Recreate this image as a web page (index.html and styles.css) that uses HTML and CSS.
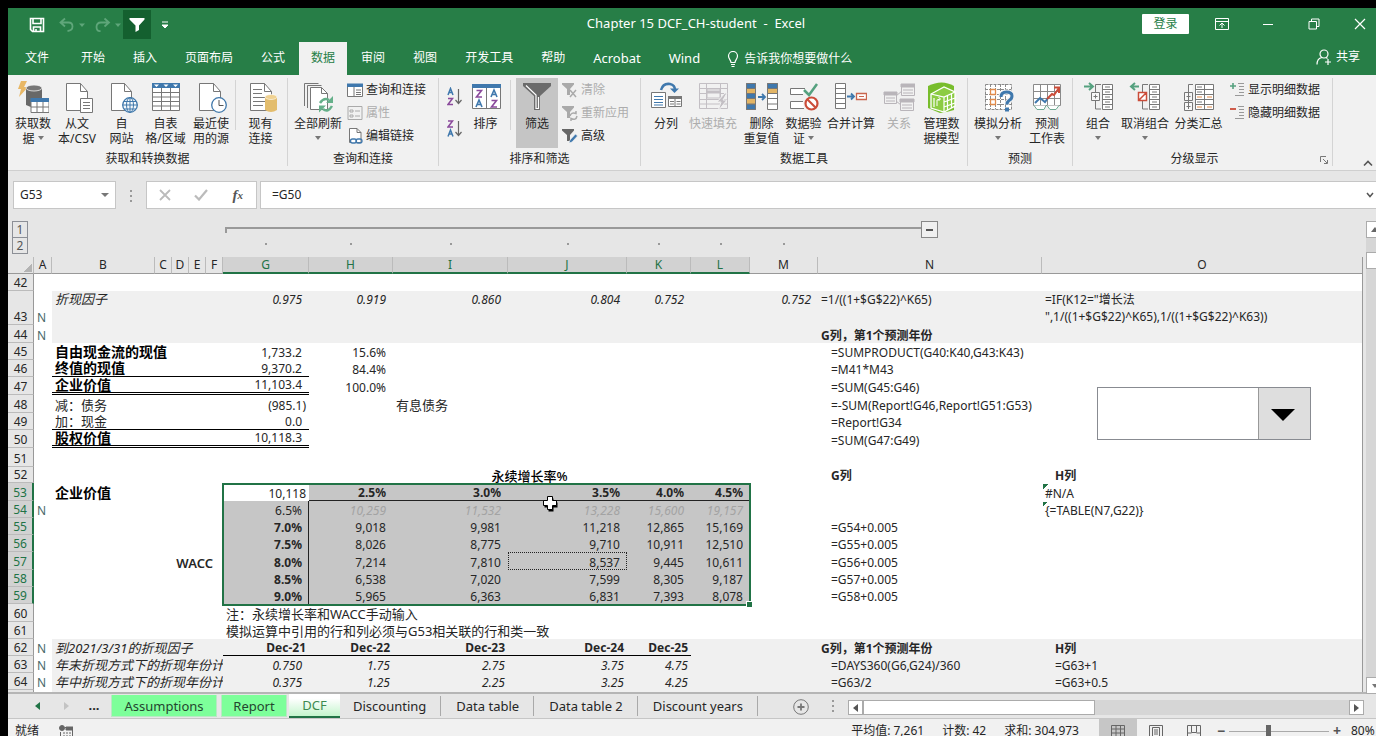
FILE: index.html
```html
<!DOCTYPE html>
<html lang="zh-CN">
<head>
<meta charset="utf-8">
<title>Chapter 15 DCF_CH-student - Excel</title>
<link rel="stylesheet" href="styles.css">
</head>
<body>
<div class="app">
<header class="titlebar">
  <div class="qat">
    <button class="q q-save" aria-label="保存"><svg width="16" height="16" viewBox="0 0 16 16" fill="none" stroke="#fff" stroke-width="1.6"><path d="M1.5 1.5h13v13h-11l-2-2zM4 1.5v5h8v-5M4.500 14.500v-4.500h7v4.500M7 12v2"/></svg></button>
    <button class="q q-undo" aria-label="撤消"><svg width="26" height="16" viewBox="0 0 26 16" fill="none" stroke="#5fa67a" stroke-width="1.8"><path d="M6 1.500L1.500 5.500L6 9.500M2 5.500h7.500q4 0 4 4t-5 4.500"/><path d="M20 6.500h6l-3 3.500z" fill="#5fa67a" stroke="none"/></svg></button>
    <button class="q q-redo" aria-label="恢复"><svg width="26" height="16" viewBox="0 0 26 16" fill="none" stroke="#5fa67a" stroke-width="1.8"><path d="M9.500 1.500L14 5.500L9.500 9.500M13.500 5.500H6q-4.500 0-4.500 4.500t4 4"/><path d="M20 6.500h6l-3 3.500z" fill="#5fa67a" stroke="none"/></svg></button>
    <button class="q q-filter" aria-label="筛选"><svg width="16" height="16" viewBox="0 0 16 16" fill="#fff"><path d="M.5 1h15v1.500L10 8.500V13l-3.500 2V8.500L.5 2.500z"/></svg></button>
    <button class="q q-more" aria-label="自定义快速访问工具栏"><svg width="8" height="8" viewBox="0 0 8 8"><path d="M1 1h6M1 4l3 3 3-3z" stroke="#fff" fill="#fff"/></svg></button>
  </div>
  <h1 class="doc-title">Chapter 15 DCF_CH-student&nbsp; -&nbsp; Excel</h1>
  <div class="winctl">
    <button class="signin">登录</button>
    <button class="wbtn" aria-label="功能区显示选项"><svg width="14" height="12" viewBox="0 0 14 12" fill="none" stroke="#fff"><path d="M.5.5h13v11H.5zM.5 3.500h13M7 10V5M4.500 7.500L7 5l2.500 2.500"/></svg></button>
    <button class="wbtn" aria-label="最小化"><svg width="12" height="12" viewBox="0 0 12 12" stroke="#fff"><path d="M1 6.500h10"/></svg></button>
    <button class="wbtn" aria-label="还原"><svg width="12" height="12" viewBox="0 0 12 12" fill="none" stroke="#fff"><path d="M1 3.500h7.500v7.500H1zM3.500 3.500V1H11v7.500H8.500"/></svg></button>
    <button class="wbtn wbtn-close" aria-label="关闭"><svg width="12" height="12" viewBox="0 0 12 12" stroke="#fff" stroke-width="1.200"><path d="M1 1l10 10M11 1L1 11"/></svg></button>
  </div>
</header>
<nav class="tabs">
  <button class="tab tab-file">文件</button><button class="tab">开始</button><button class="tab">插入</button><button class="tab">页面布局</button><button class="tab">公式</button><button class="tab tab-on">数据</button><button class="tab">审阅</button><button class="tab">视图</button><button class="tab">开发工具</button><button class="tab">帮助</button><button class="tab latin">Acrobat</button><button class="tab latin">Wind</button>
  <button class="tellme"><svg width="12" height="16" viewBox="0 0 12 16" fill="none" stroke="#fff" stroke-width="1.200"><path d="M4 11.500C4 9 1.500 8 1.500 5a4.500 4.500 0 0 1 9 0c0 3-2.500 4-2.500 6.500zM4 13.500h4M4.500 15.500h3"/></svg>告诉我你想要做什么</button>
  <button class="share"><svg width="16" height="16" viewBox="0 0 16 16" fill="none" stroke="#fff" stroke-width="1.200"><circle cx="8" cy="5" r="4"/><path d="M1 15.500c0-4 2-6.500 5-7M10 8.500l1.500 1M9 13h6M12 10v6"/></svg>共享</button>
</nav>

<section class="ribbon">
  <div class="group">
    <div class="tools tools-get">
      <button class="big w44"><svg class="ico" viewBox="0 0 32 32"><path d="M4 0h6L7 6h4L2 16l2-8H1z" fill="#e8b765"/><path d="M9 7v17q7 4 16 1V7z" fill="#686868"/><ellipse cx="17" cy="7" rx="8" ry="3" fill="#777" stroke="#f1f1f1" stroke-width=".8"/><path d="M14 17.500h18v14H14z" fill="#fff" stroke="#777"/><path d="M13.500 17h19v4h-19z" fill="#3f78ad"/><path d="M20 21v10M26 21v10M14 26h18" stroke="#777"/></svg><span>获取数<br>据 <i class="caret"></i></span></button>
      <button class="big w44"><svg class="ico" viewBox="0 0 32 32"><path d="M5.500 2.500h14l7 8v19h-21z" fill="#fff" stroke="#777"/><path d="M19.500 2.500v8h7" fill="none" stroke="#777"/><path d="M19.500 17.500h12v14h-12z" fill="#fff" stroke="#777"/><path d="M22 21.500h7M22 24.500h7M22 27.500h7" stroke="#777"/></svg><span>从文<br>本/CSV</span></button>
      <button class="big w45"><svg class="ico" viewBox="0 0 32 32"><path d="M5.500 2.500h13l7 8v19h-20z" fill="#fff" stroke="#777"/><path d="M18.500 2.500v8h7" fill="none" stroke="#777"/><circle cx="24" cy="24" r="7.300" fill="#f4f8fb" stroke="#4078ab" stroke-width="1.300"/><path d="M24 16.500v15M16.500 24h15M18 20.500h12M18 28h12" stroke="#4078ab"/><ellipse cx="24" cy="24" rx="3.500" ry="7.300" fill="none" stroke="#4078ab"/></svg><span>自<br>网站</span></button>
      <button class="big w43"><svg class="ico" viewBox="0 0 32 32"><path d="M2.500 2.500h27v27h-27z" fill="#fff" stroke="#777"/><path d="M2 2h28v5H2z" fill="#3f78ad"/><path d="M4 3.500h5L6.500 6zM13.500 3.500h5L16 6zM23 3.500h5L25.500 6z" fill="#fff"/><path d="M11.500 7v22M20.500 7v22M3 11.500h27M3 16h27M3 20.500h27M3 25h27" stroke="#777"/></svg><span>自表<br>格/区域</span></button>
      <button class="big w48"><svg class="ico" viewBox="0 0 32 32"><path d="M4.500 2.500h14l7 8v19h-21z" fill="#fff" stroke="#777"/><path d="M18.500 2.500v8h7" fill="none" stroke="#777"/><circle cx="24" cy="24" r="7.300" fill="#fff" stroke="#4078ab" stroke-width="1.300"/><path d="M24 19v5.500h4.500" fill="none" stroke="#555"/></svg><span>最近使<br>用的源</span></button>
      <i class="vsep"></i>
      <button class="big w45"><svg class="ico" viewBox="0 0 32 32"><path d="M5.500 2.500h14l7 8v19h-21z" fill="#fff" stroke="#777"/><path d="M19.500 2.500v8h7M8 8.500h9M8 12.500h9M8 16.500h12M8 20.500h12M8 24.500h10" fill="none" stroke="#777"/><path d="M20 16v13q6 4 12 0V16z" fill="#e3bd6d"/><ellipse cx="26" cy="16" rx="6" ry="2.500" fill="#f0d292" stroke="#fff" stroke-width=".6"/></svg><span>现有<br>连接</span></button>
    </div>
    <h2>获取和转换数据</h2>
  </div>
  <div class="group g-conn">
    <div class="tools">
      <button class="big w50"><svg class="ico" viewBox="0 0 32 32" fill="#fff" stroke="#777"><path d="M2.500 25V2.500h14M5.500 27V4.500h14" fill="none"/><path d="M8.500 6.500h11l6 6v16h-17z"/><path d="M19.500 6.500v6h6" fill="none"/><path d="M18 22q4-6 9-3M30 25q-4 7-9 3" fill="none" stroke="#65b08a" stroke-width="2.500"/><path d="M31 15v7h-7zM17 31.500v-7h7z" fill="#65b08a" stroke="none"/></svg><span>全部刷新<br><i class="caret"></i></span></button>
      <div class="list">
        <button class="small"><svg viewBox="0 0 16 16"><path d="M.5 2.500h15v12H.5z" fill="#fff" stroke="#777"/><path d="M0 1.500h16V5H0z" fill="#3f78ad"/><path d="M7 5v9M9 8h5M9 10.500h5M9 12.500h5" stroke="#777"/></svg>查询和连接</button>
        <button class="small off"><svg viewBox="0 0 16 16" fill="none" stroke="#aaa"><path d="M1 1.500h14v13H1zM3 5h3v2H3zM3 10h3v2H3zM8 6h5M8 11h5"/></svg>属性</button>
        <button class="small"><svg viewBox="0 0 16 16"><path d="M2.500.5H10l4 4v10H2.500z" fill="#fff" stroke="#777"/><path d="M10 .5v4h4" fill="none" stroke="#777"/><rect x="3.500" y="11" width="6" height="4" rx="2" fill="#fff" stroke="#3f78ad" stroke-width="1.300"/><rect x="9" y="11" width="6" height="4" rx="2" fill="none" stroke="#3f78ad" stroke-width="1.300"/></svg>编辑链接</button>
      </div>
    </div>
    <h2>查询和连接</h2>
  </div>
  <div class="group g-sort">
    <div class="tools">
      <div class="azcol">
        <button aria-label="升序"><svg width="16" height="20" viewBox="0 0 16 20" fill="none" stroke-width="1.500"><path d="M1 8l2.500-6.500L6 8M2 5.500h3" stroke="#3f78ad"/><path d="M1 11.500h4.500L1 17.500h5" stroke="#8a4a9c"/><path d="M11.500 2v14M8.500 13l3 3.500 3-3.500" stroke="#666" stroke-width="1.200"/></svg></button>
        <button aria-label="降序"><svg width="16" height="20" viewBox="0 0 16 20" fill="none" stroke-width="1.500"><path d="M1 2h4.500L1 8h5" stroke="#8a4a9c"/><path d="M1 17.500L3.500 11 6 17.500M2 15h3" stroke="#3f78ad"/><path d="M11.500 2v14M8.500 13l3 3.500 3-3.500" stroke="#666" stroke-width="1.200"/></svg></button>
      </div>
      <button class="big w43"><svg class="ico" viewBox="0 0 32 32" fill="none"><path d="M2.500 3.500h28v24h-28z" fill="#fff" stroke="#777"/><path d="M2 3h29v4H2z" fill="#3f78ad"/><path d="M16.500 7v20" stroke="#777"/><g stroke-width="1.600"><path d="M6.500 9.500h5l-5 6.500h5.500M21.500 19.500h5l-5 6.500h5.500" stroke="#8a4a9c"/><path d="M6 26l3-7 3 7M7 23.500h4M21 16l3-7 3 7M22 13.500h4" stroke="#3f78ad"/></g></svg><span>排序</span></button>
      <i class="vsep"></i>
      <button class="big w42 pressed"><svg class="ico" viewBox="0 0 32 32"><path d="M2 2h28v3L19 15v14h-6V15L2 5z" fill="#6b6b6b"/><path d="M5 4.500L15 14v13.500h2.500V16" fill="none" stroke="#fff" stroke-width="1.200"/></svg><span>筛选</span></button>
      <div class="list">
        <button class="small off"><svg viewBox="0 0 16 16"><path d="M0 1h12v1.500L8 7v6H5V7L0 2.500z" fill="#aaa"/><path d="M8 8l6 7M14 8l-6 7" stroke="#aaa" stroke-width="1.500"/></svg>清除</button>
        <button class="small off"><svg viewBox="0 0 16 16"><path d="M0 1h12v1.500L8 7v6H5V7L0 2.500z" fill="#aaa"/><path d="M8 11q1-4 6-2.500V6M15 11q-1 5-6 2.500V16" fill="none" stroke="#aaa" stroke-width="1.500"/></svg>重新应用</button>
        <button class="small"><svg viewBox="0 0 16 16"><path d="M0 1h12v1.500L8 7v6H5V7L0 2.500z" fill="#666"/><path d="M7 15l1-3 5.500-6 2 2-5.500 6z" fill="#3f78ad" stroke="#f1f1f1" stroke-width=".6"/></svg>高级</button>
      </div>
    </div>
    <h2>排序和筛选</h2>
  </div>
  <div class="group g-tools">
    <div class="tools">
      <button class="big w42"><svg class="ico" viewBox="0 0 32 32" fill="none"><path d="M1.500 11.500h14v15h-14z" fill="#fff" stroke="#777"/><path d="M4 15.500h9M4 18.500h9M4 21.500h9M4 24h9" stroke="#3f78ad"/><path d="M18.500 15.500h13v10h-13z" fill="#fff" stroke="#777"/><path d="M18 15h14v3H18z" fill="#777"/><path d="M25 16v9M20 20.500h4M26.500 20.500h4M20 23h4M26.500 23h4" stroke="#777"/><path d="M11 9q2-7 9-6 5 1 5 6" stroke="#3f78ad" stroke-width="2.500"/><path d="M20 7.500h9L24.500 12z" fill="#3f78ad"/></svg><span>分列</span></button>
      <button class="big off w52"><svg class="ico" viewBox="0 0 32 32" fill="none" stroke="#c3bfc4"><path d="M2.500 2.500h28v25h-28zM2 7.500h28M2 12.500h28M2 18.500h28M2 23h28M9.500 3v24M23.500 3v24"/><path d="M10 8h13v9H10z" fill="#f1f1f1"/><path d="M10 11h13" stroke-width="3"/><path d="M28 12l-8 9h4l-3 9 9-11h-4l4-7z" fill="#c3bfc4" stroke="#f1f1f1"/></svg><span>快速填充</span></button>
      <button class="big w45"><svg class="ico" viewBox="0 0 32 32" stroke="#777"><path d="M.5 2.500h9v26h-9zM21.500 2.500h10v26h-10z" fill="#fff"/><path d="M.5 2.500h9v5h-9zM.5 12.500h9v5h-9zM.5 23h9v5.500h-9zM21.500 2.500h10v5h-10z" fill="#3f78ad"/><path d="M.5 7.500h9v5h-9zM.5 17.500h9V23h-9zM21.500 7.500h10v5h-10z" fill="#e3b565"/><path d="M21.500 17.500h10M21.500 23h10"/><path d="M12 16h6M16 13l3 3-3 3" fill="none" stroke="#3f78ad" stroke-width="1.800"/></svg><span>删除<br>重复值</span></button>
      <button class="big w39"><svg class="ico" viewBox="0 0 32 32" fill="none"><path d="M17 7.500H2.500v6H15M15 20.500H2.500v7H16" fill="#fff" stroke="#777"/><path d="M16 9l5 5 8-11" stroke="#55a17f" stroke-width="2.500"/><circle cx="23.500" cy="22.500" r="6" fill="#fff" stroke="#cb4c39" stroke-width="2.200"/><path d="M19.500 18.500l8 8" stroke="#cb4c39" stroke-width="2.200"/></svg><span>数据验<br>证 <i class="caret"></i></span></button>
      <button class="big w56"><svg class="ico" viewBox="0 0 32 32" fill="none"><path d="M.5 2.500h10v25H.5zM.5 7.500h10M.5 12.500h10M.5 17.500h10M.5 22.500h10" fill="#fff" stroke="#777"/><path d="M12 15.500h6M16 12.500l3 3-3 3" stroke="#3f78ad" stroke-width="1.800"/><path d="M21.500 12.500h10v6h-10z" fill="#fff" stroke="#c9664e" stroke-width="1.300"/><path d="M24 15.500h5" stroke="#c9664e"/></svg><span>合并计算</span></button>
      <button class="big off w40"><svg class="ico" viewBox="0 0 32 32" fill="none" stroke="#b9b5ba"><path d="M1.500 11.500h12v11h-12zM18.500 3.500h13v11h-13zM17.500 18.500h13v11h-13zM13 15l6-5M13 20l5 4M3 17h9M3 20h9M20 9h10M20 12h10M19 24h10M19 27h10"/><path d="M1 11h13v3H1zM18 3h14v3H18zM17 18h14v3H17z" fill="#b9b5ba"/></svg><span>关系</span></button>
      <button class="big w45"><svg class="ico" viewBox="0 0 32 32"><path d="M2 5q14-7 26 0v24q-6 2-14 3L2 27z" fill="#78bd2c"/><path d="M5 13l13-7 11 5v14l-11 6-13-4z" fill="#8ccc43" stroke="#fff" stroke-width="1.300"/><path d="M5 13l13 3 11-5M18 16v15M8 17v9M21.500 15v14M25.500 13v14M18 21l11-4M18 26l11-4" fill="none" stroke="#fff" stroke-width="1.200"/><path d="M11 25v-6l3-1M12.500 16l2 2-2 2" fill="none" stroke="#fff"/></svg><span>管理数<br>据模型</span></button>
    </div>
    <h2>数据工具</h2>
  </div>
  <div class="group g-fore">
    <div class="tools">
      <button class="big w50"><svg class="ico" viewBox="0 0 32 32" fill="none"><path d="M3.500 3.500h26v25h-26zM3 8.500h26M3 13.500h26M3 18.500h26M3 23.500h26M8.500 3v25M13.500 3v25M18.500 3v25M23.500 3v25" fill="#fff" stroke="#8a8a8a" stroke-dasharray="3 1"/><path d="M8.500 8.500h5v5h-5zM8.500 18.500h5v5h-5z" stroke="#e08a4a" stroke-width="1.300"/><path d="M19 16q0-5 5.500-5t5.500 4q0 3-3 4.500-2 1.500-2 4" stroke="#f1f1f1" stroke-width="5"/><path d="M19 16q0-5 5.500-5t5.500 4q0 3-3 4.500-2 1.500-2 4" stroke="#3f78ad" stroke-width="3"/><path d="M23 26.500h4v4h-4z" fill="#3f78ad"/></svg><span>模拟分析<br><i class="caret"></i></span></button>
      <button class="big w48"><svg class="ico" viewBox="0 0 32 32" fill="none"><path d="M2.500 3.500h27v21h-27zM2 10.500h28M2 17.500h28M9.500 3v21M16.500 3v21M23.500 3v21" fill="#fff" stroke="#8a8a8a"/><path d="M3 24.500l3 4h7l2-4M16 24.500l3 4h6l3-4" fill="#fff" stroke="#6faa92"/><path d="M4 22l5-5 5 4 3-4" stroke="#3f78ad" stroke-width="2"/><path d="M16 18l5-5 2 1 5-7M23 6.500h5v5.500" stroke="#cb4c39" stroke-width="2"/></svg><span>预测<br>工作表</span></button>
    </div>
    <h2>预测</h2>
  </div>
  <div class="group g-outline">
    <div class="tools">
      <button class="big w36"><svg class="ico" viewBox="0 0 32 32" fill="none" stroke="#777"><path d="M2 5.500h8M7 2l4 3.500L7 9" stroke="#55a17f" stroke-width="2"/><path d="M19 3.500h-5.500V28H19"/><path d="M9.500 11.500h8v8h-8z" fill="#f8f8f8"/><path d="M20.500 3.500h10v25h-10zM20.500 8.500h10M20.500 13.500h10M20.500 18.500h10M20.500 23.500h10" fill="#fff"/><path d="M11.500 15.500h4M13.500 13.500v4M23 6h5M23 11h5M23 16h5M23 21h5M23 26h5"/></svg><span>组合<br><i class="caret"></i></span></button>
      <button class="big w58"><svg class="ico" viewBox="0 0 32 32" fill="none" stroke="#777"><path d="M10 5.500H2M6 2L2 5.500 6 9" stroke="#55a17f" stroke-width="2"/><path d="M19 3.500h-5.500V28H19"/><path d="M9.500 11.500h8v8h-8zM10 19l7-7" fill="#fff" stroke="#cb4c39" stroke-width="1.500"/><path d="M20.500 3.500h10v25h-10zM20.500 8.500h10M20.500 13.500h10M20.500 18.500h10M20.500 23.500h10" fill="#fff"/><path d="M23 6h5M23 11h5M23 16h5M23 21h5M23 26h5"/></svg><span>取消组合<br><i class="caret"></i></span></button>
      <button class="big w49"><svg class="ico" viewBox="0 0 32 32" fill="none" stroke="#777"><path d="M10 3.500H5.500V28M1.500 11.500h8v8h-8zM1.500 21.500h8v8h-8z" fill="#f8f8f8"/><path d="M3.500 15.500h4M5.500 13.500v4M3.500 25.500h4M5.500 23.500v4"/><path d="M12.500 3.500h18v25h-18zM12.500 8.500h18M12.500 13.500h18M12.500 18.500h18M12.500 23.500h18M21.500 3.500v25" fill="#fff"/><path d="M14 6h5M14 11h5M14 21h5"/><path d="M14 16h5M14 26h5M24 16h5M24 26h5" stroke="#e08a4a"/></svg><span>分类汇总</span></button>
      <div class="list">
        <button class="small"><svg viewBox="0 0 16 16" fill="none"><path d="M0 4h6M3 1v6" stroke="#55a17f" stroke-width="1.600"/><path d="M8 1.500h6M9 4.500h5M9 7.500h5M9 10.500h5M5 13.500h9" stroke="#999"/></svg>显示明细数据</button>
        <button class="small"><svg viewBox="0 0 16 16" fill="none"><path d="M0 4h6" stroke="#cb4c39" stroke-width="1.800"/><path d="M8 1.500h6M9 4.500h5M9 7.500h5M9 10.500h5M5 13.500h9" stroke="#999"/></svg>隐藏明细数据</button>
      </div>
    </div>
    <div class="label-row"><h2>分级显示</h2><button class="launch" aria-label="分级显示设置"><svg width="8" height="8" viewBox="0 0 8 8" fill="none" stroke="#777"><path d="M.5 6V.5H6M3 3l4 4M7.500 4v3.500H4"/></svg></button></div>
  </div>
  <button class="collapse" aria-label="折叠功能区"><svg width="10" height="7" viewBox="0 0 10 7" fill="none" stroke="#555" stroke-width="1.600"><path d="M1 5.500l4-4 4 4"/></svg></button>
</section>

<section class="fbar">
  <div class="namebox"><input aria-label="名称框" value="G53"><i class="caret caret-lg"></i></div>
  <i class="grip"></i>
  <div class="fxbox">
    <button aria-label="取消"><svg width="12" height="12" viewBox="0 0 12 12" stroke="#bbb" stroke-width="1.800"><path d="M1 1l10 10M11 1L1 11"/></svg></button>
    <button aria-label="输入"><svg width="14" height="12" viewBox="0 0 14 12" fill="none" stroke="#bbb" stroke-width="2.200"><path d="M1 6.500l4 4L13 1"/></svg></button>
    <button class="fx" aria-label="插入函数">f<sub>x</sub></button>
  </div>
  <div class="formula"><input aria-label="编辑栏" value="=G50"><svg width="8" height="6" viewBox="0 0 8 6" fill="none" stroke="#555" stroke-width="1.500"><path d="M1 1l3 3.500L7 1"/></svg></div>
</section>

<main class="work">
 <div class="sheetcol">
  <div class="outline">
    <div class="levels"><button>1</button><button>2</button></div>
    <div class="bracket"><i class="bar"></i><button aria-label="折叠"><svg width="7" height="2" viewBox="0 0 7 2"><path d="M0 0h7v2H0z" fill="#555"/></svg></button></div>
    <div class="dots"><i></i><i></i><i></i><i></i><i></i><i></i><i></i></div>
  </div>
  <div class="sheet">
  <table>
    <colgroup><col class="c-rh"><col class="c-a"><col class="c-b"><col class="c-s"><col class="c-s"><col class="c-s"><col class="c-s"><col class="c-g"><col class="c-h"><col class="c-i"><col class="c-j"><col class="c-k"><col class="c-l"><col class="c-m"><col class="c-n"><col></colgroup>
    <thead><tr><th class="corner"></th><th>A</th><th>B</th><th>C</th><th>D</th><th>E</th><th>F</th><th class="on">G</th><th class="on">H</th><th class="on">I</th><th class="on">J</th><th class="on">K</th><th class="on">L</th><th>M</th><th>N</th><th>O</th></tr></thead>
    <tbody>
    <tr class="r17"><th>42</th><td colspan="15"></td></tr>
    <tr class="r34 band top it"><th>43</th><td class="n">N</td><td colspan="5" class="zh">折现因子</td><td class="num">0.975</td><td class="num">0.919</td><td class="num">0.860</td><td class="num">0.804</td><td class="num">0.752</td><td></td><td class="num">0.752</td><td class="up">=1/((1+$G$22)^K65)</td><td class="up">=IF(K12="增长法<br>",1/((1+$G$22)^K65),1/((1+$G$22)^K63))</td></tr>
    <tr class="r18 band"><th>44</th><td class="n">N</td><td colspan="12"></td><td class="b">G列，第1个预测年份</td><td></td></tr>
    <tr class="r17"><th>45</th><td></td><td colspan="5" class="bzh">自由现金流的现值</td><td class="num">1,733.2</td><td class="num">15.6%</td><td colspan="5"></td><td class="in">=SUMPRODUCT(G40:K40,G43:K43)</td><td></td></tr>
    <tr class="r17"><th>46</th><td></td><td colspan="5" class="bzh ul">终值的现值</td><td class="num ul">9,370.2</td><td class="num">84.4%</td><td colspan="5"></td><td class="in">=M41*M43</td><td></td></tr>
    <tr class="r18"><th>47</th><td></td><td colspan="5" class="bzh dl">企业价值</td><td class="num dl">11,103.4</td><td class="num">100.0%</td><td colspan="5"></td><td class="in">=SUM(G45:G46)</td><td></td></tr>
    <tr class="r18"><th>48</th><td></td><td colspan="5" class="zh">减：债务</td><td class="num p3">(985.1)</td><td></td><td class="zh" colspan="5">有息债务</td><td class="in">=-SUM(Report!G46,Report!G51:G53)</td><td></td></tr>
    <tr class="r17"><th>49</th><td></td><td colspan="5" class="zh ul">加：现金</td><td class="num ul">0.0</td><td colspan="6"></td><td class="in">=Report!G34</td><td></td></tr>
    <tr class="r18"><th>50</th><td></td><td colspan="5" class="bzh dl">股权价值</td><td class="num dl">10,118.3</td><td colspan="6"></td><td class="in">=SUM(G47:G49)</td><td></td></tr>
    <tr class="r19"><th>51</th><td colspan="15"></td></tr>
    <tr class="r16"><th>52</th><td colspan="7"></td><td colspan="5" class="mid">永续增长率%</td><td></td><td class="in b">G列</td><td class="in b">H列</td></tr>
    <tr class="r18 selrow"><th>53</th><td></td><td colspan="5" class="bzh">企业价值</td><td class="num p3">10,118</td><td class="s num b hl">2.5%</td><td class="s num b hl">3.0%</td><td class="s num b hl">3.5%</td><td class="s num b hl">4.0%</td><td class="s num b hl">4.5%</td><td></td><td></td><td class="err">#N/A</td></tr>
    <tr class="r17 selrow"><th>54</th><td class="n">N</td><td colspan="5"></td><td class="s num vl">6.5%</td><td class="s num ghost">10,259</td><td class="s num ghost">11,532</td><td class="s num ghost">13,228</td><td class="s num ghost">15,600</td><td class="s num ghost">19,157</td><td></td><td></td><td class="err">{=TABLE(N7,G22)}</td></tr>
    <tr class="r17 selrow"><th>55</th><td></td><td colspan="5"></td><td class="s num b vl">7.0%</td><td class="s num">9,018</td><td class="s num">9,981</td><td class="s num">11,218</td><td class="s num">12,865</td><td class="s num">15,169</td><td></td><td class="in">=G54+0.005</td><td></td></tr>
    <tr class="r17 selrow"><th>56</th><td></td><td colspan="5"></td><td class="s num b vl">7.5%</td><td class="s num">8,026</td><td class="s num">8,775</td><td class="s num">9,710</td><td class="s num">10,911</td><td class="s num">12,510</td><td></td><td class="in">=G55+0.005</td><td></td></tr>
    <tr class="r18 selrow"><th>57</th><td></td><td colspan="5" class="wacc">WACC</td><td class="s num b vl">8.0%</td><td class="s num">7,214</td><td class="s num">7,810</td><td class="s num ants">8,537</td><td class="s num">9,445</td><td class="s num">10,611</td><td></td><td class="in">=G56+0.005</td><td></td></tr>
    <tr class="r17 selrow"><th>58</th><td></td><td colspan="5"></td><td class="s num b vl">8.5%</td><td class="s num">6,538</td><td class="s num">7,020</td><td class="s num">7,599</td><td class="s num">8,305</td><td class="s num">9,187</td><td></td><td class="in">=G57+0.005</td><td></td></tr>
    <tr class="r17 selrow"><th>59</th><td></td><td colspan="5"></td><td class="s num b vl">9.0%</td><td class="s num">5,965</td><td class="s num">6,363</td><td class="s num">6,831</td><td class="s num">7,393</td><td class="s num">8,078</td><td></td><td class="in">=G58+0.005</td><td></td></tr>
    <tr class="r18"><th>60</th><td colspan="6"></td><td colspan="7" class="zh">注：永续增长率和WACC手动输入</td><td></td><td></td></tr>
    <tr class="r17"><th>61</th><td colspan="6"></td><td colspan="7" class="zh">模拟运算中引用的行和列必须与G53相关联的行和类一致</td><td></td><td></td></tr>
    <tr class="r17 band"><th>62</th><td class="n">N</td><td colspan="5" class="zh i">到2021/3/31的折现因子</td><td class="num b p3 ul">Dec-21</td><td class="num b p3 ul">Dec-22</td><td class="num b p3 ul">Dec-23</td><td class="num b p3 ul">Dec-24</td><td class="num b p3 ul">Dec-25</td><td colspan="2"></td><td class="b">G列，第1个预测年份</td><td class="in b">H列</td></tr>
    <tr class="r17 band"><th>63</th><td class="n">N</td><td colspan="5" class="zh i clip">年末折现方式下的折现年份计</td><td class="num i">0.750</td><td class="num i p3">1.75</td><td class="num i p3">2.75</td><td class="num i p3">3.75</td><td class="num i p3">4.75</td><td colspan="2"></td><td class="in">=DAYS360(G6,G24)/360</td><td class="in">=G63+1</td></tr>
    <tr class="r17 band"><th>64</th><td class="n">N</td><td colspan="5" class="zh i clip">年中折现方式下的折现年份计</td><td class="num i">0.375</td><td class="num i p3">1.25</td><td class="num i p3">2.25</td><td class="num i p3">3.25</td><td class="num i p3">4.25</td><td colspan="2"></td><td class="in">=G63/2</td><td class="in">=G63+0.5</td></tr>
    <tr class="r17 band"><th></th><td></td><td colspan="5" class="zh i">终值的折现年份计算</td><td colspan="8"></td><td></td></tr>
    </tbody>
  </table>
  <div class="selection"><i class="handle"></i></div>
  <svg class="cursor" width="16" height="17" viewBox="0 0 16 17"><path d="M6.500 3.500h5v4h4v5h-4v4h-5v-4h-4v-5h4z" fill="#000"/><path d="M5.500 1.500h5v4h4v5h-4v4h-5v-4h-4v-5h4z" fill="#fff" stroke="#000"/></svg>
  <div class="combo"><select aria-label="组合框"><option></option></select><svg width="52" height="51" viewBox="0 0 52 51"><path d="M0 0h52v51H0z" fill="#dedede"/><path d="M.5 0v51" stroke="#999"/><path d="M13 21h24L25 33z" fill="#000"/></svg></div>
  </div>
 </div>
 <div class="vscroll"><button aria-label="向上"><i class="tri-u"></i></button><i class="vthumb"></i><button class="down" aria-label="向下"><i class="caret"></i></button></div>
</main>

<footer class="strip">
  <div class="nav"><button aria-label="上一个工作表"><svg width="6" height="8" viewBox="0 0 6 8"><path d="M5 0v8L0 4z" fill="#217346"/></svg></button><button aria-label="下一个工作表"><svg width="6" height="8" viewBox="0 0 6 8"><path d="M1 0v8l5-4z" fill="#c3c3c3"/></svg></button><button class="more">...</button></div>
  <button class="st green w-as">Assumptions</button><button class="st green w-re">Report</button><button class="st cur">DCF</button><button class="st plain">Discounting</button><button class="st plain">Data table</button><button class="st plain">Data table 2</button><button class="st plain">Discount years</button>
  <button class="add" aria-label="新工作表"><svg width="16" height="16" viewBox="0 0 16 16" fill="none" stroke="#777"><circle cx="8" cy="8" r="7.300"/><path d="M8 4.500v7M4.500 8h7" stroke-width="1.800"/></svg></button>
  <i class="grip grip-s"></i>
  <div class="hscroll"><button aria-label="向左"><i class="tri-l"></i></button><i class="hthumb"></i><button class="right" aria-label="向右"><i class="tri-r"></i></button></div>
</footer>
<div class="status">
  <span>就绪</span>
  <svg class="macro" width="14" height="14" viewBox="0 0 14 14" fill="none" stroke="#666"><circle cx="3" cy="3" r="2.500" fill="#666"/><path d="M6 2.500h7.500v11h-12V7" /><path d="M7 2h7v3H7z" fill="#666"/><path d="M4 8h2M7 8h2M10 8h2M4 11h2M7 11h2M10 11h2"/></svg>
  <div class="stats"><span>平均值: 7,261</span><span>计数: 42</span><span>求和: 304,973</span></div>
  <div class="views">
    <button class="von" aria-label="普通"><svg width="14" height="12" viewBox="0 0 14 12" fill="none" stroke="#666"><path d="M.5.5h13v11H.5zM.5 4h13M.5 8h13M5 .5v11M9.500.5v11"/></svg></button>
    <button aria-label="页面布局"><svg width="14" height="12" viewBox="0 0 14 12" fill="none" stroke="#666"><path d="M.5.5h13v11H.5zM3.500 2.500h7v9h-7zM5 5h4M5 7h4M5 9h4"/></svg></button>
    <button aria-label="分页预览"><svg width="14" height="12" viewBox="0 0 14 12" fill="none" stroke="#666"><path d="M.5 11.500V.5h13v11M4.500.5v7h5v-7M.5 8h4M9.500 8h4"/></svg></button>
  </div>
  <button class="zb" aria-label="缩小">−</button><input class="zoom" type="range" min="10" max="190" value="80" aria-label="缩放"><button class="zb" aria-label="放大">+</button><span class="pct">80%</span>
</div>
</div>
</body>
</html>
```
FILE: styles.css
```css
* { box-sizing: border-box; }
body { margin: 0; background: #000; overflow: hidden; font: 12px/16px "Noto Sans", "Noto Sans CJK SC", sans-serif; color: #262626; }
button, input, select { font: inherit; color: inherit; border: 0; padding: 0; margin: 0; background: none; }
button { white-space: nowrap; display: flex; align-items: center; justify-content: center; }
h1, h2 { margin: 0; font: inherit; }
.app { height: 100vh; padding: 8px 0 0 8px; display: flex; flex-direction: column; overflow: hidden; }

.titlebar { flex: none; height: 34px; background: #277e47; color: #fff; display: grid; grid-template-columns: 1fr auto 1fr; align-items: start; overflow: hidden; }
.qat { display: flex; padding: 2px 0 0 21px; }
.q { height: 29px; }
.q-save { width: 16px; margin-right: 14px; }
.q-undo { width: 26px; margin-right: 10px; }
.q-redo { width: 26px; margin-right: 2px; }
.q-filter { width: 28px; background: #14602f; }
.q-more { width: 28px; }
.doc-title { padding: 7px 0 0 8px; font-size: 13px; }
.winctl { display: flex; justify-content: flex-end; }
.signin { width: 47px; height: 20px; margin: 6px 10px 0 0; background: #fff; color: #277e47; border-radius: 1px; }
.wbtn { width: 46px; height: 31px; }
.wbtn-close { margin-right: -7px; }

.tabs { flex: none; height: 33px; background: #277e47; color: #fff; display: flex; padding-left: 1px; }
.tab { padding: 0 14px 2px; }
.tab-file { padding: 0 16px 2px; margin-right: 2px; }
.tab-on { background: #f1f1f1; color: #277e47; padding: 0 12px 2px; }
.latin { font-size: 13px; }
.tellme { margin-left: 13px; gap: 5px; }
.share { margin-left: auto; padding: 0 16px 4px 0; gap: 4px; }

.ribbon { flex: none; height: 96px; background: #f1f1f1; border-bottom: 1px solid #cfcfcf; display: flex; }
.group { display: flex; flex-direction: column; border-right: 1px solid #d4d4d4; margin: 3px 0 4px; height: 88px; }
.group h2 { text-align: center; margin-top: 4px; line-height: 14px; }
.tools { display: flex; flex: none; height: 70px; padding: 0 5px; }
.tools-get { padding: 0 4px 0 3px; }
.big { flex-direction: column; justify-content: flex-start; padding-top: 3px; line-height: 15px; flex: none; }
.big span { margin-top: 3px; min-width: 0; }
.ico { width: 32px; height: 32px; flex: none; }
.w36 { width: 36px; } .w39 { width: 39px; } .w40 { width: 40px; } .w42 { width: 42px; } .w43 { width: 43px; } .w44 { width: 44px; } .w45 { width: 45px; } .w48 { width: 48px; } .w49 { width: 49px; } .w50 { width: 50px; } .w52 { width: 52px; } .w56 { width: 56px; } .w58 { width: 58px; }
.vsep { width: 1px; height: 50px; background: #d4d4d4; margin: 2px 2px 0 0; }
.pressed { background: #c5c5c5; }
.off { color: #adadad; }
.list { margin-left: 4px; }
.small { height: 23px; gap: 3px; }
.small svg { width: 16px; height: 16px; }
.g-conn { width: 151px; }
.g-sort { width: 202px; }
.g-sort .tools { padding-left: 8px; }
.g-sort .vsep { margin: 2px 5px 0 3px; }
.azcol { display: flex; flex-direction: column; gap: 12px; padding: 9px 1px 0 0; }
.g-tools { width: 327px; }
.g-tools .tools { padding-left: 4px; }
.g-fore { width: 105px; }
.g-outline { width: 260px; }
.g-outline .tools { padding-left: 7px; }
.g-outline .list { margin-left: 7px; }
.g-outline .small { gap: 2px; }
.label-row { display: flex; }
.label-row h2 { flex: 1; }
.launch { width: 16px; height: 12px; margin-top: 6px; }
.collapse { margin: 80px 0 0 auto; height: 16px; width: 16px; }

.caret { display: inline-block; border: 3px solid transparent; border-top: 4px solid #777; border-bottom: 0; vertical-align: 3px; }
.caret-lg { border-width: 4px 4px 0; }
.tri-u { border: 4px solid transparent; border-bottom: 5px solid #666; border-top: 0; }
.tri-l { border: 4px solid transparent; border-right: 5px solid #555; border-left: 0; }
.tri-r { border: 4px solid transparent; border-left: 5px solid #555; border-right: 0; }

.fbar { flex: none; height: 50px; background: #e6e6e6; padding: 10px 0 12px 5px; display: flex; }
.namebox { width: 103px; background: #fff; border: 1px solid #c6c6c6; display: flex; align-items: center; padding: 0 6px; }
.namebox input { flex: 1; min-width: 0; }
.grip { width: 2px; height: 12px; margin: 9px 14px 0; background: repeating-linear-gradient(#999 0 2px, transparent 2px 5px); }
.fxbox { width: 111px; background: #fff; border: 1px solid #c6c6c6; display: flex; margin-right: 3px; }
.fxbox button { flex: 1; }
.fx { font: italic bold 15px/16px "Liberation Serif", serif; color: #555; }
.fx sub { font-size: 11px; vertical-align: -2px; }
.formula { flex: 1; background: #fff; border: 1px solid #c6c6c6; border-right: 0; display: flex; align-items: center; padding: 0 2px 0 11px; }
.formula input { flex: 1; }

.work { flex: 1; min-height: 0; display: flex; background: #e6e6e6; }
.sheetcol { flex: 1; min-width: 0; display: flex; flex-direction: column; border-bottom: 2px solid #b5b5b5; }
.outline { flex: none; height: 36px; display: grid; grid-template-columns: 215px 86px 84px 115px 119px 64px 59px 68px 1fr; grid-template-rows: 16px 1fr; }
.levels { grid-row: 1 / 3; padding-left: 4px; }
.levels button { width: 16px; height: 17px; border: 1px solid #8c8f96; line-height: 14px; color: #555; }
.levels button + button { margin-top: -1px; }
.bracket { grid-column: 2 / 10; display: flex; padding-left: 2px; }
.bar { width: 696px; height: 6px; margin-top: 6px; border-top: 2px solid #999; border-left: 2px solid #999; }
.bracket button { width: 17px; height: 17px; border: 1px solid #888; background: #f0f0f0; }
.dots { grid-column: 2 / 9; display: grid; grid-template-columns: subgrid; justify-items: center; padding-top: 6px; }
.dots i { width: 2px; height: 2px; background: #999; }

.sheet { position: relative; flex: 1; min-height: 0; overflow: hidden; background: #fff; border-right: 1px solid #999; margin-right: 3px; }
table { width: 100%; table-layout: fixed; border-collapse: separate; border-spacing: 0; line-height: 14px; }
.c-rh { width: 26px; } .c-a { width: 18px; } .c-b { width: 103px; } .c-s { width: 17px; } .c-g { width: 86px; } .c-h { width: 84px; } .c-i { width: 115px; } .c-j { width: 119px; } .c-k { width: 64px; } .c-l { width: 59px; } .c-m { width: 68px; } .c-n { width: 224px; }
th { font-weight: normal; padding: 0; background: #e6e6e6; vertical-align: bottom; }
thead th { height: 17px; border-bottom: 1px solid #999; border-right: 1px solid #bbb; vertical-align: middle; line-height: 16px; }
thead th:last-child { border-right: 0; }
thead .on { background: #d2d2d2; color: #217346; border-bottom: 2px solid #217346; line-height: 15px; }
.corner { background: linear-gradient(135deg, #e6e6e6 0 64%, #b3b3b3 64%); background-size: 12px 12px; background-repeat: no-repeat; background-position: 12px 3px; background-color: #e6e6e6; }
tbody th { border-bottom: 1px solid #bbb; border-right: 1px solid #999; }
.selrow th { background: #d2d2d2; color: #217346; border-right: 2px solid #217346; }
td { padding: 0 3px; vertical-align: bottom; white-space: nowrap; }
.r16 { height: 16px; } .r17 { height: 17px; } .r18 { height: 18px; } .r19 { height: 19px; } .r34 { height: 34px; }
.band td { background: #f0f0f0; }
.band td:nth-child(2) { background: #fff; }
.n { color: #4a6a6a; }
.top td { vertical-align: top; line-height: 17px; }
.top .n { vertical-align: bottom; line-height: 14px; }
.it td, .i { font-style: italic; }
.it .n, .it .up { font-style: normal; }
.zh { font-size: 13px; padding-bottom: 1px; }
.bzh { font-size: 14px; font-weight: bold; color: #000; padding-bottom: 1px; }
.num { text-align: right; padding-right: 7px; }
.p3 { padding-right: 3px; }
.b { font-weight: bold; }
.in { padding-left: 13px; }
.ul { border-bottom: 1px solid #000; }
.dl { border-bottom: 3px double #000; padding-bottom: 0; }
.mid { text-align: center; font-size: 13px; font-weight: 500; color: #000; }
.clip { overflow: hidden; }
.wacc { text-align: right; padding-right: 10px; font-size: 13px; font-weight: 600; }
.s { background: #c6c6c6; }
.hl { border-bottom: 1px solid #222; }
.vl { border-right: 1px solid #222; padding-right: 6px; }
.ghost { color: #a3a3a3; font-style: italic; }
.ants { outline: 1px dotted #222; outline-offset: -1px; }
.err { background: linear-gradient(135deg, #217346 0 50%, transparent 50%) 1px 1px / 5px 5px no-repeat; }
.selection { position: absolute; left: 214px; top: 226px; width: 529px; height: 123px; border: 2px solid #217346; }
.handle { position: absolute; right: -3px; bottom: -3px; width: 5px; height: 5px; background: #217346; outline: 1px solid #fff; }
.cursor { position: absolute; left: 534px; top: 238px; }
.combo { position: absolute; left: 1089px; top: 130px; width: 214px; height: 53px; border: 1px solid #888b91; background: #fff; display: flex; }
.combo select { flex: 1; appearance: none; }
.combo svg { position: absolute; right: 0; top: 0; pointer-events: none; }

.vscroll { width: 10px; background: #d6d6d6; display: flex; flex-direction: column; overflow: hidden; }
.vscroll button { width: 17px; height: 17px; background: #fff; border: 1px solid #ababab; flex: none; }
.vthumb { width: 17px; height: 17px; background: #fff; border: 1px solid #ababab; margin-top: 14px; }
.vscroll .down { margin-top: auto; }

.strip { flex: none; height: 25px; background: #e6e6e6; border-bottom: 1px solid #c6c6c6; display: flex; font-size: 13px; }
.nav { width: 103px; display: flex; padding-left: 16px; }
.nav button { width: 28px; }
.nav .more { font-weight: bold; padding-bottom: 2px; }
.st { height: 24px; }
.green { background: #7dff9a; color: #24452f; border: 1px solid #b9e8c4; border-top: 0; margin: 1px 4px 0 0; height: 22px; }
.w-as { width: 106px; }
.w-re { width: 66px; }
.cur { width: 51px; color: #3d8a50; background: linear-gradient(#fff 20%, #c4f5cd); border-bottom: 2px solid #217346; margin-left: -2px; }
.plain { padding: 0 15px; background: linear-gradient(#a9a9a9, #a9a9a9) right center / 1px 20px no-repeat; }
.cur + .plain { padding-left: 13px; }
.add { margin: 1px 23px 0 35px; width: 16px; }
.grip-s { margin: 6px 14px 0 0; }
.hscroll { flex: 1; height: 15px; margin: 6px 12px 0 0; background: #d6d6d6; display: flex; }
.hscroll button { width: 15px; border: 1px solid #ababab; background: #fff; }
.hthumb { width: 232px; background: #fff; border: 1px solid #ababab; }
.hscroll .right { margin-left: auto; }

.status { flex: none; height: 17px; background: #f1f1f1; display: flex; align-items: flex-start; line-height: 24px; padding-left: 7px; overflow: hidden; }
.macro { margin: 6px 0 0 20px; }
.stats { margin-left: auto; display: flex; gap: 18px; padding-right: 20px; }
.views { display: flex; }
.views button { width: 38px; height: 24px; }
.von { background: #c6c6c6; }
.zb { width: 16px; height: 24px; font-weight: bold; font-size: 14px; color: #555; }
.zoom { appearance: none; width: 100px; height: 24px; background: linear-gradient(#aaa, #aaa) center / 100% 1px no-repeat; }
.zoom::-webkit-slider-thumb { appearance: none; width: 5px; height: 13px; background: #666; }
.pct { padding-left: 6px; width: 31px; }
```
